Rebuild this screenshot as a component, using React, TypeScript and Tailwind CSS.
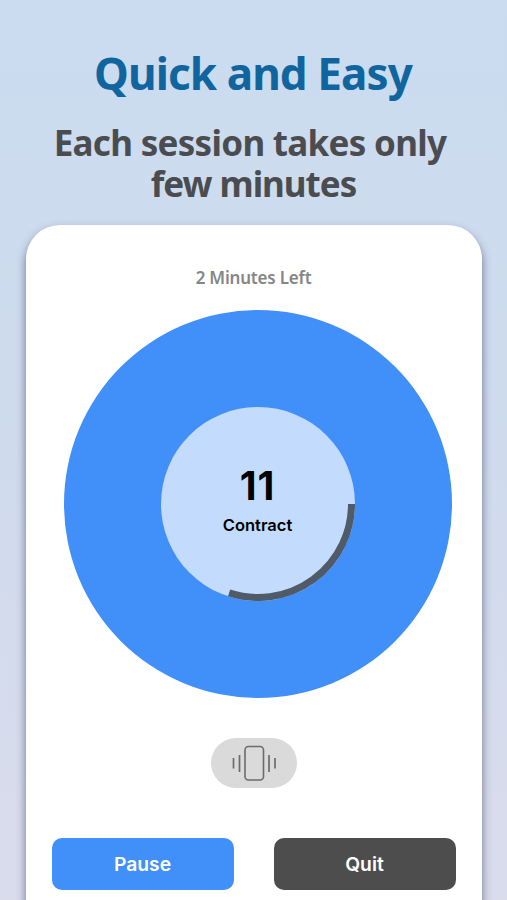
import React from 'react';

const TOTAL_ANGLE = 108;
const RADIUS = 93.5;

const arcEnd = () => {
  const rad = (TOTAL_ANGLE * Math.PI) / 180;
  return `${97 + RADIUS * Math.cos(rad)} ${97 + RADIUS * Math.sin(rad)}`;
};

const ProgressArc: React.FC = () => (
  <svg viewBox="0 0 194 194" className="absolute inset-0 w-full h-full" fill="none">
    <path d={`M${97 + RADIUS} 97A${RADIUS} ${RADIUS} 0 0 1 ${arcEnd()}`} stroke="#4f5b68" strokeWidth="7" />
  </svg>
);

const VibrateIcon: React.FC = () => (
  <svg width="46" height="36" viewBox="0 0 46 36" fill="none" stroke="#6c6c6c">
    <rect x="14" y="1.5" width="18.5" height="33.5" rx="3.5" strokeWidth="1.6" />
    <path d="M2.5 13v10.5M8.5 10v17M38 10v17M44 13v10.5" strokeWidth="1.7" />
  </svg>
);

interface ActionButtonProps {
  label: string;
  className: string;
}

const ActionButton: React.FC<ActionButtonProps> = ({ label, className }) => (
  <button className={`w-[182px] h-[52px] pt-[2px] rounded-[10px] text-white text-[19.3px] leading-none font-semibold ${className}`}>
    {label}
  </button>
);

export default function App() {
  return (
    <div className="h-[900px] w-[507px] overflow-hidden flex flex-col items-center bg-linear-to-b from-[#cbdcf0] via-[#cfdbed] to-[#dadcec] font-['Inter',sans-serif]">
      {/* Headline */}
      <div className="h-[225px] shrink-0 pt-[43px] text-center font-['Noto_Sans','Open_Sans',sans-serif] font-bold whitespace-nowrap">
        <h1 className="pr-[1px] text-[44px] leading-[60px] tracking-[-0.9px] text-[#10659f]">Quick and Easy</h1>
        <div className="mt-[19px] text-[35px] leading-[41px] text-[#4b4c4f]">
          <p className="pr-[7px] tracking-[-0.7px]">Each session takes only</p>
          <p className="tracking-[-1px]">few minutes</p>
        </div>
      </div>

      {/* Session card */}
      <div className="w-[456px] h-[720px] shrink-0 rounded-[34px] bg-white shadow-[0_5px_10px_rgba(65,70,100,0.7)] flex flex-col items-center">
        <p className="mt-[41px] h-[24px] leading-[24px] font-['Noto_Sans','Open_Sans',sans-serif] text-[17px] font-semibold tracking-[-0.2px] text-[#868686]">
          2 Minutes Left
        </p>

        <div className="mt-[20px] ml-[8px] size-[388px] shrink-0 rounded-full bg-[#418ff9] flex items-center justify-center">
          <div className="relative size-[194px] rounded-full bg-[#c3dcfe] flex flex-col items-center">
            <ProgressArc />
            <span className="mt-[59px] text-[39px] leading-[40px] tracking-[1px] font-bold text-black">11</span>
            <span className="mt-[9px] text-[16.5px] leading-[20px] font-semibold text-black">Contract</span>
          </div>
        </div>

        <div className="mt-[40px] w-[86px] h-[50px] shrink-0 rounded-full bg-[#dadada] flex items-center justify-center">
          <VibrateIcon />
        </div>

        <div className="mt-[50px] flex gap-[40px]">
          <ActionButton label="Pause" className="bg-[#418ff9]" />
          <ActionButton label="Quit" className="bg-[#4d4d4d]" />
        </div>
      </div>
    </div>
  );
}
